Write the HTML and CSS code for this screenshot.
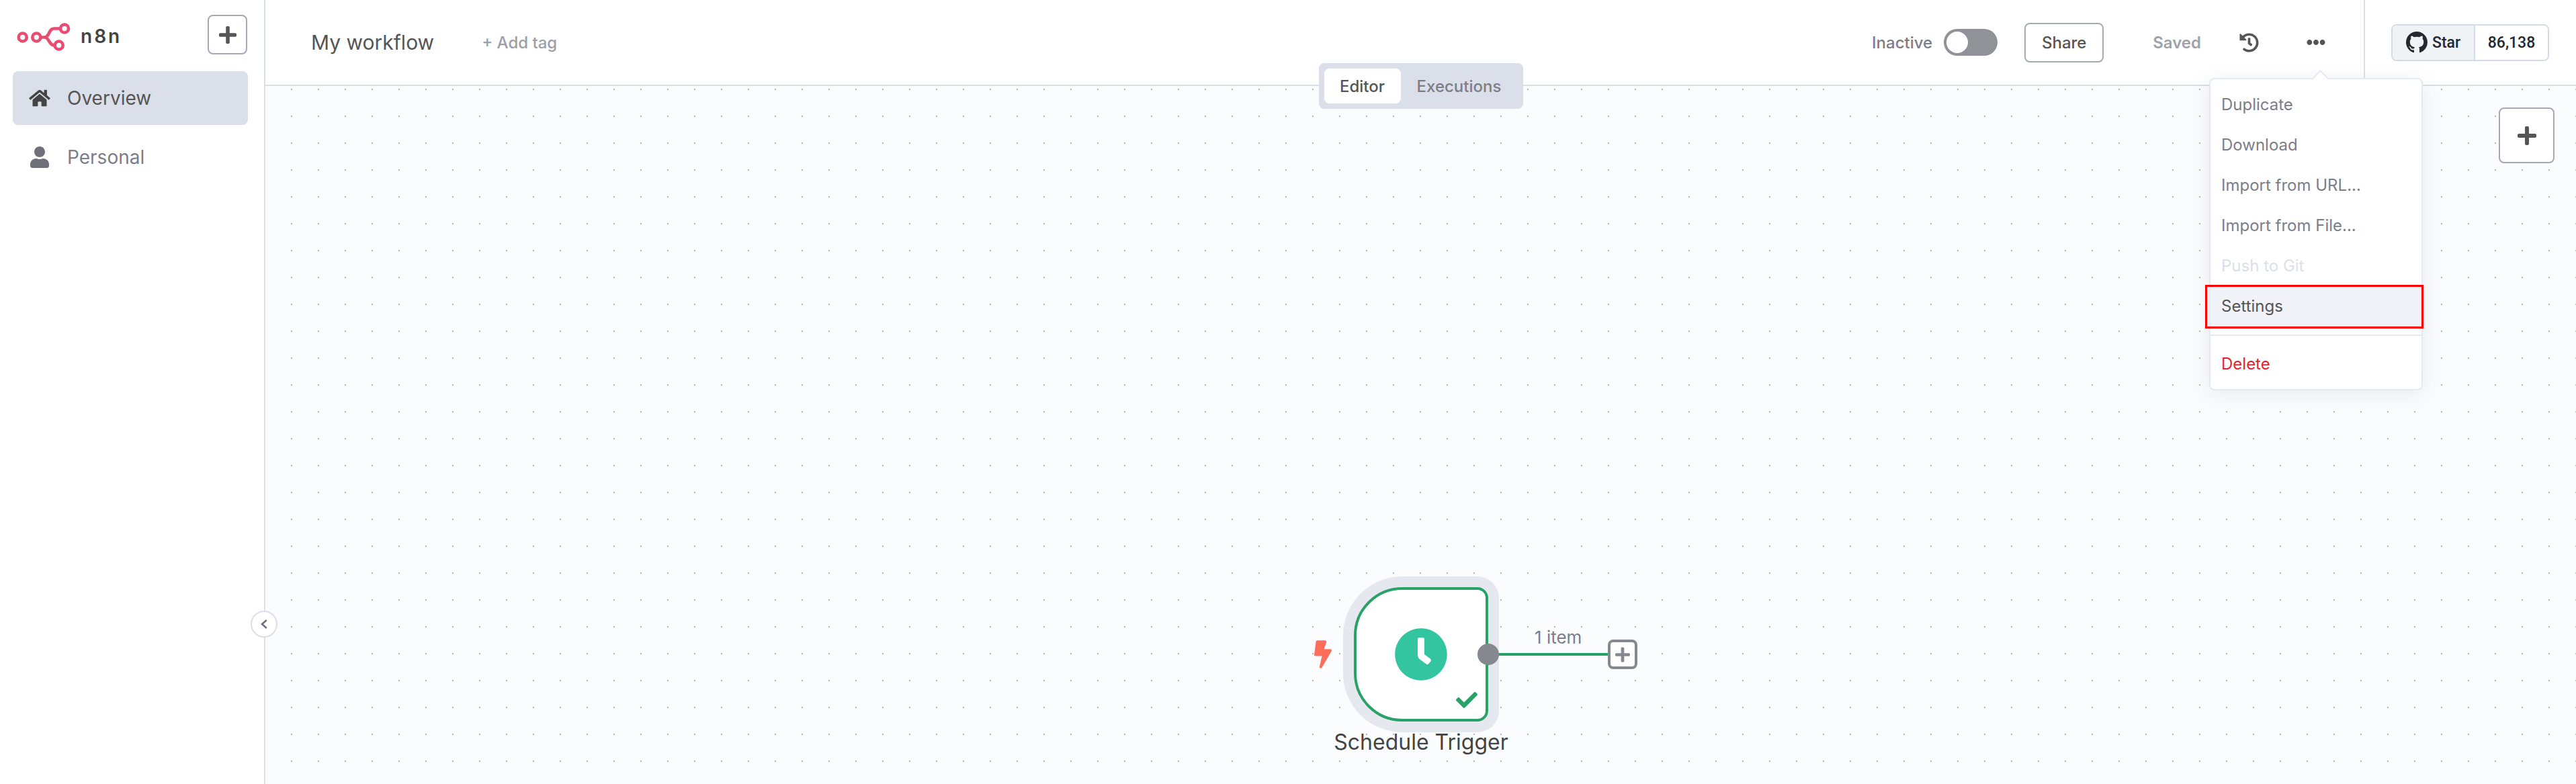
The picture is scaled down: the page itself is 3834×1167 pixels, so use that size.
FILE: index.html
```html
<!DOCTYPE html>
<html lang="en">
<head>
    <meta charset="UTF-8">
    <meta name="viewport" content="width=device-width, initial-scale=1.0">
    <title>My workflow - n8n</title>
    <link rel="stylesheet" href="styles.css">
</head>
<body>
<div class="app">
    <aside class="sidebar">
        <div class="side-top">
            <div class="logo">
                <svg class="logo-mark" viewBox="0 0 90 50" width="90" height="50" fill="none" stroke="#ea4b71" stroke-width="4.6">
                    <circle cx="11.7" cy="28.5" r="6"/>
                    <circle cx="32.3" cy="28.5" r="6"/>
                    <circle cx="74" cy="15.5" r="6"/>
                    <circle cx="65.7" cy="40.5" r="6"/>
                    <path d="M38.5 28.5H44C52 28.5 50 15.5 58.5 15.5H68"/>
                    <path d="M44 28.5C52 28.5 50 40.5 59.5 40.5"/>
                </svg>
                <span class="logo-text">n8n</span>
            </div>
            <button class="icon-btn side-add">
                <svg viewBox="0 0 448 512" width="26" height="30"><path d="M416 208H272V64c0-17.67-14.33-32-32-32h-32c-17.67 0-32 14.33-32 32v144H32c-17.67 0-32 14.33-32 32v32c0 17.67 14.33 32 32 32h144v144c0 17.67 14.33 32 32 32h32c17.67 0 32-14.33 32-32V304h144c17.67 0 32-14.33 32-32v-32c0-17.67-14.33-32-32-32z"/></svg>
            </button>
        </div>
        <nav class="side-nav">
            <a class="nav-item active">
                <span class="nav-icon">
                    <svg viewBox="0 0 576 512" width="32" height="28"><path d="M280.37 148.26L96 300.11V464a16 16 0 0 0 16 16l112.06-.29a16 16 0 0 0 15.92-16V368a16 16 0 0 1 16-16h64a16 16 0 0 1 16 16v95.64a16 16 0 0 0 16 16.05L464 480a16 16 0 0 0 16-16V300L295.67 148.26a12.19 12.19 0 0 0-15.3 0zM571.6 251.47L488 182.56V44.05a12 12 0 0 0-12-12h-56a12 12 0 0 0-12 12v72.61L318.47 43a48 48 0 0 0-61 0L4.34 251.47a12 12 0 0 0-1.6 16.9l25.5 31A12 12 0 0 0 45.15 301l235.22-193.74a12.19 12.19 0 0 1 15.3 0L530.9 301a12 12 0 0 0 16.9-1.6l25.5-31a12 12 0 0 0-1.7-16.93z"/></svg>
                </span>
                Overview
            </a>
            <a class="nav-item">
                <span class="nav-icon">
                    <svg viewBox="0 0 448 512" width="28" height="32"><path d="M224 256c70.7 0 128-57.3 128-128S294.7 0 224 0 96 57.3 96 128s57.3 128 128 128zm89.6 32h-16.7c-22.2 10.2-46.9 16-72.9 16s-50.6-5.8-72.9-16h-16.7C60.2 288 0 348.2 0 422.4V464c0 26.5 21.5 48 48 48h352c26.5 0 48-21.5 48-48v-41.6c0-74.2-60.2-134.4-134.4-134.4z"/></svg>
                </span>
                Personal
            </a>
        </nav>
    </aside>

    <main class="main">
        <header class="topbar">
            <span class="wf-name">My workflow</span>
            <span class="add-tag">+ Add tag</span>
            <div class="spacer"></div>
            <span class="status">Inactive</span>
            <span class="toggle"><span class="knob"></span></span>
            <button class="share">Share</button>
            <span class="saved">Saved</span>
            <svg class="history" viewBox="0 0 512 512" width="29" height="29"><path d="M504 255.531c.253 136.64-111.18 248.372-247.82 248.468-59.015.042-113.223-20.53-155.822-54.911-11.077-8.94-11.905-25.541-1.839-35.607l11.267-11.267c8.609-8.609 22.353-9.551 31.891-1.984C173.062 425.135 212.781 440 256 440c101.705 0 184-82.311 184-184 0-101.705-82.311-184-184-184-48.814 0-93.149 18.969-126.068 49.932l50.754 50.754c10.08 10.08 2.941 27.314-11.313 27.314H24c-8.837 0-16-7.163-16-16V38.627c0-14.254 17.234-21.393 27.314-11.314l49.372 49.372C129.209 34.136 189.552 8 256 8c136.81 0 247.747 110.78 248 247.531zm-180.912 78.784l9.823-12.63c8.138-10.463 6.253-25.542-4.21-33.679L288 256.349V152c0-13.255-10.745-24-24-24h-16c-13.255 0-24 10.745-24 24v135.651l65.409 50.874c10.463 8.137 25.541 6.253 33.679-4.21z"/></svg>
            <svg class="more" viewBox="0 0 512 512" width="28" height="28"><path d="M328 256c0 39.8-32.2 72-72 72s-72-32.2-72-72 32.2-72 72-72 72 32.2 72 72zm104-72c-39.8 0-72 32.2-72 72s32.2 72 72 72 72-32.2 72-72-32.2-72-72-72zm-352 0c-39.8 0-72 32.2-72 72s32.2 72 72 72 72-32.2 72-72-32.2-72-72-72z"/></svg>
            <div class="gh-wrap">
                <div class="gh">
                    <span class="gh-star">
                        <svg viewBox="0 0 16 16" width="32" height="32"><path d="M8 0C3.58 0 0 3.58 0 8c0 3.54 2.29 6.53 5.47 7.59.4.07.55-.17.55-.38 0-.19-.01-.82-.01-1.49-2.01.37-2.53-.49-2.69-.94-.09-.23-.48-.94-.82-1.13-.28-.15-.68-.52-.01-.53.63-.01 1.08.58 1.23.82.72 1.21 1.87.87 2.33.66.07-.52.28-.87.51-1.07-1.78-.2-3.64-.89-3.64-3.95 0-.87.31-1.59.82-2.15-.08-.2-.36-1.02.08-2.12 0 0 .67-.21 2.2.82.64-.18 1.32-.27 2-.27.68 0 1.36.09 2 .27 1.53-1.04 2.2-.82 2.2-.82.44 1.1.16 1.92.08 2.12.51.56.82 1.27.82 2.15 0 3.07-1.87 3.75-3.65 3.95.29.25.54.73.54 1.48 0 1.07-.01 1.93-.01 2.2 0 .21.15.46.55.38A8.013 8.013 0 0016 8c0-4.42-3.58-8-8-8z"/></svg>
                        Star
                    </span>
                    <span class="gh-count">86,138</span>
                </div>
            </div>
        </header>

        <div class="tabs">
            <span class="tab on">Editor</span>
            <span class="tab">Executions</span>
        </div>

        <div class="canvas">
            <button class="icon-btn canvas-add">
                <svg viewBox="0 0 448 512" width="28" height="32"><path d="M416 208H272V64c0-17.67-14.33-32-32-32h-32c-17.67 0-32 14.33-32 32v144H32c-17.67 0-32 14.33-32 32v32c0 17.67 14.33 32 32 32h144v144c0 17.67 14.33 32 32 32h32c17.67 0 32-14.33 32-32V304h144c17.67 0 32-14.33 32-32v-32c0-17.67-14.33-32-32-32z"/></svg>
            </button>

            <svg class="bolt" viewBox="0 0 320 512" width="26" height="42"><path d="M296 160H180.6l42.6-129.8C227.2 15 215.7 0 200 0H56C44 0 33.8 8.9 32.2 20.8l-32 240C-1.7 275.2 9.5 288 24 288h118.7L96.6 482.5c-3.6 15.2 8 29.5 23.3 29.5 8.4 0 16.4-4.4 20.8-12l176-304c9.3-15.9-2.2-36-20.7-36z"/></svg>

            <div class="node">
                <svg viewBox="0 0 512 512" width="80" height="80"><path d="M256,8C119,8,8,119,8,256S119,504,256,504,504,393,504,256,393,8,256,8Zm92.49,313h0l-20,25a16,16,0,0,1-22.49,2.5h0l-67-49.72a40,40,0,0,1-15-31.23V112a16,16,0,0,1,16-16h32a16,16,0,0,1,16,16V256l58,42.5A16,16,0,0,1,348.49,321Z"/></svg>
                <svg class="node-check" viewBox="0 0 512 512" width="32" height="32"><path d="M173.898 439.404l-166.4-166.4c-9.997-9.997-9.997-26.206 0-36.204l36.203-36.204c9.997-9.998 26.207-9.998 36.204 0L192 312.69 432.095 72.596c9.997-9.997 26.207-9.997 36.204 0l36.203 36.204c9.997 9.997 9.997 26.206 0 36.204l-294.4 294.401c-9.998 9.997-26.207 9.997-36.204-.001z"/></svg>
                <span class="node-port"></span>
            </div>
            <div class="node-name">Schedule Trigger</div>

            <div class="edge">
                <span class="edge-label">1 item</span>
                <span class="edge-line"></span>
                <span class="edge-add">
                    <svg viewBox="0 0 448 512" width="22" height="25"><path d="M416 208H272V64c0-17.67-14.33-32-32-32h-32c-17.67 0-32 14.33-32 32v144H32c-17.67 0-32 14.33-32 32v32c0 17.67 14.33 32 32 32h144v144c0 17.67 14.33 32 32 32h32c17.67 0 32-14.33 32-32V304h144c17.67 0 32-14.33 32-32v-32c0-17.67-14.33-32-32-32z"/></svg>
                </span>
            </div>
        </div>

        <div class="menu">
            <div class="menu-item">Duplicate</div>
            <div class="menu-item">Download</div>
            <div class="menu-item">Import from URL...</div>
            <div class="menu-item">Import from File...</div>
            <div class="menu-item disabled">Push to Git</div>
            <div class="menu-item settings">Settings</div>
            <div class="menu-group">
                <div class="menu-item danger">Delete</div>
            </div>
        </div>
    </main>

    <button class="collapse">
        <svg viewBox="0 0 16 20" width="12" height="16" fill="none" stroke="#6d6f78" stroke-width="3.4"><path d="M13 2L4 10l9 8"/></svg>
    </button>
</div>
</body>
</html>
```

FILE: styles.css
```css
* {
    box-sizing: border-box;
}

html, body {
    margin: 0;
    height: 100%;
    overflow: hidden;
}

body {
    font-family: Inter, "Liberation Sans", sans-serif;
    color: #555;
    background: #fff;
}

button {
    font-family: inherit;
    padding: 0;
}

.app {
    display: flex;
    position: relative;
    height: 1167px;
}

/* sidebar */
.sidebar {
    width: 395px;
    flex: none;
    border-right: 2px solid #dbdfe7;
    background: #fff;
}

.side-top {
    display: flex;
    justify-content: space-between;
    align-items: center;
    padding: 22px 25px 25px 22px;
}

.logo {
    display: flex;
    align-items: center;
}

.logo-mark {
    flex: none;
}

.logo-text {
    margin-left: 8px;
    font-size: 28px;
    font-weight: 600;
    letter-spacing: 3px;
    line-height: 1;
    color: #444;
    position: relative;
    top: 2px;
}

.icon-btn {
    display: flex;
    align-items: center;
    justify-content: center;
    background: #fff;
    border: 2px solid #a5a9b6;
    border-radius: 8px;
    fill: #555;
}

.side-add {
    width: 59px;
    height: 59px;
}

.side-nav {
    display: flex;
    flex-direction: column;
    gap: 8px;
    padding: 0 24px 0 19px;
}

.nav-item {
    display: flex;
    align-items: center;
    height: 80px;
    padding-left: 24px;
    border-radius: 8px;
    font-size: 28px;
    color: #7d7d87;
    fill: #6f7079;
}

.nav-item.active {
    background: #dbdfe9;
    color: #555;
    fill: #444;
}

.nav-icon {
    display: flex;
    justify-content: center;
    width: 32px;
    margin-right: 25px;
}

.collapse {
    position: absolute;
    left: 373px;
    top: 909px;
    width: 40px;
    height: 40px;
    display: flex;
    align-items: center;
    justify-content: center;
    border: 2px solid #dbdfe7;
    border-radius: 50%;
    background: #fff;
}

/* header */
.main {
    flex: 1;
    position: relative;
    display: flex;
    flex-direction: column;
    min-width: 0;
}

.topbar {
    display: flex;
    align-items: center;
    height: 128px;
    padding-left: 68px;
    border-bottom: 2px solid #dbdfe7;
    background: #fff;
}

.wf-name {
    font-size: 30px;
    color: #555;
}

.add-tag {
    margin-left: 71px;
    font-size: 24px;
    font-weight: 500;
    color: #9c9ea8;
}

.spacer {
    flex: 1;
}

.status {
    font-size: 24px;
    font-weight: 500;
    color: #7d7d87;
}

.toggle {
    display: flex;
    align-items: center;
    width: 80px;
    height: 40px;
    margin-left: 17px;
    padding: 4px;
    border-radius: 20px;
    background: #909298;
}

.knob {
    width: 32px;
    height: 32px;
    border-radius: 50%;
    background: #fff;
}

.share {
    width: 118px;
    height: 59px;
    margin-left: 40px;
    border: 2px solid #a5a9b6;
    border-radius: 8px;
    background: #fff;
    font-size: 24px;
    font-weight: 500;
    color: #555;
}

.saved {
    margin-left: 73px;
    font-size: 24px;
    font-weight: 600;
    color: #a0a2aa;
}

.history {
    margin-left: 57px;
    fill: #555;
}

.more {
    margin-left: 71px;
    fill: #555;
}

.gh-wrap {
    display: flex;
    align-items: center;
    align-self: stretch;
    width: 316px;
    margin-left: 57px;
    padding-left: 39px;
    border-left: 2px solid #dbdfe7;
}

.gh {
    display: flex;
    width: 235px;
    height: 55px;
    border: 2px solid #d3dce4;
    border-radius: 8px;
    font-family: Roboto, sans-serif;
    font-size: 23px;
    color: #24292f;
    overflow: hidden;
}

.gh-star {
    display: flex;
    align-items: center;
    gap: 7px;
    width: 123px;
    padding-left: 20px;
    background: #f0f3f6;
    border-right: 2px solid #d3dce4;
    font-weight: 500;
    fill: #24292f;
}

.gh-count {
    flex: 1;
    text-align: center;
    line-height: 51px;
    font-weight: 500;
    background: #fff;
}

/* editor / executions switch */
.tabs {
    position: absolute;
    left: 50%;
    top: 94px;
    transform: translateX(-50%);
    display: flex;
    width: 304px;
    height: 68px;
    padding: 8px;
    border-radius: 8px;
    background: #dbdfe9;
    font-size: 24px;
    font-weight: 500;
    z-index: 2;
}

.tab {
    display: flex;
    align-items: center;
    justify-content: center;
    width: 114px;
    border-radius: 8px;
    color: #7d7d87;
}

.tab + .tab {
    width: 174px;
}

.tab.on {
    background: #fff;
    color: #555;
}

/* canvas */
.canvas {
    flex: 1;
    position: relative;
    background-color: #fbfcfe;
    background-image: radial-gradient(circle, #b4b6bc 1px, transparent 1.5px);
    background-size: 40px 40px;
    background-position: 19px -15px;
}

.canvas-add {
    position: absolute;
    right: 32px;
    top: 32px;
    width: 83px;
    height: 83px;
}

.bolt {
    position: absolute;
    left: 1561px;
    top: 825px;
    fill: #ff6d5a;
}

.node {
    position: absolute;
    left: 1620px;
    top: 746px;
    width: 200px;
    height: 200px;
    display: flex;
    align-items: center;
    justify-content: center;
    background: #fff;
    border: 4px solid #29a268;
    border-radius: 72px 16px 16px 72px;
    box-shadow: 0 0 0 16px #e6e8ef;
    fill: #33c5a0;
}

.node-check {
    position: absolute;
    right: 12px;
    bottom: 12px;
    fill: #29a268;
}

.node-port {
    position: absolute;
    left: 180px;
    top: 80px;
    width: 32px;
    height: 32px;
    border-radius: 50%;
    background: #85888e;
}

.node-name {
    position: absolute;
    left: 1520px;
    top: 954px;
    width: 400px;
    text-align: center;
    font-size: 32px;
    line-height: 46px;
    color: #444;
}

.edge {
    position: absolute;
    left: 1836px;
    top: 824px;
    width: 206px;
    height: 44px;
    display: flex;
    align-items: center;
}

.edge-line {
    flex: 1;
    height: 4px;
    background: #29a268;
}

.edge-label {
    position: absolute;
    left: 53px;
    top: -18px;
    font-size: 26px;
    line-height: 30px;
    color: #7d7d87;
}

.edge-add {
    display: flex;
    align-items: center;
    justify-content: center;
    width: 44px;
    height: 44px;
    border: 4px solid #85888e;
    border-radius: 8px;
    background: #fff;
    fill: #85888e;
}

/* workflow menu */
.menu {
    position: absolute;
    right: 228px;
    top: 116px;
    width: 318px;
    height: 465px;
    padding-top: 7px;
    border: 2px solid #e6e9f2;
    border-radius: 8px;
    background: #fff;
    box-shadow: 0 6px 32px rgba(70, 80, 110, .1);
    font-size: 24px;
    color: #7d7d87;
    z-index: 3;
}

.menu::before {
    content: "";
    position: absolute;
    left: 154px;
    top: -10px;
    width: 17px;
    height: 17px;
    background: #fff;
    border-left: 2px solid #e6e9f2;
    border-top: 2px solid #e6e9f2;
    transform: rotate(45deg);
}

.menu-item {
    position: relative;
    display: flex;
    align-items: center;
    height: 60px;
    padding-left: 16px;
}

.menu-item.disabled {
    color: #dbdfe9;
}

.menu-item.settings {
    background: #f1f3f8;
    box-shadow: 0 1px 0 #f1f3f8;
    color: #555;
}

.menu-item.settings::after {
    content: "";
    position: absolute;
    left: -8px;
    right: -3px;
    top: -1px;
    bottom: -4px;
    border: 3px solid #f00;
}

.menu-group {
    margin-top: 13px;
    padding-top: 11px;
    border-top: 2px solid #e6e9f2;
}

.menu-item.danger {
    color: #ea1f30;
}
```
